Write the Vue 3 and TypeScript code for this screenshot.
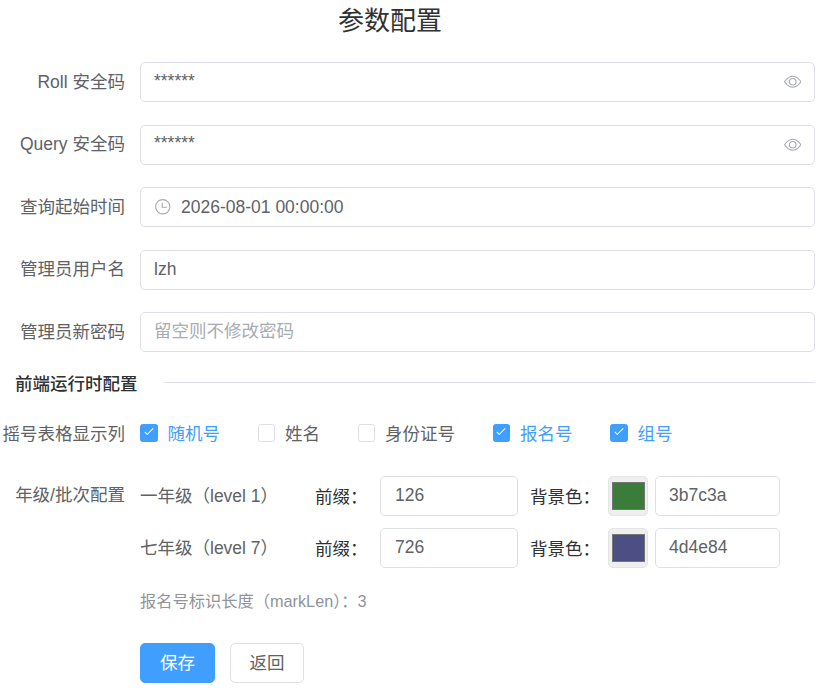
<template>
  <div class="page">
    <h2 class="title">参数配置</h2>

    <div v-for="row in secretRows" :key="row.label" class="form-item">
      <label class="item-label">{{ row.label }}</label>
      <div class="input-box">
        <input class="inner up" :value="row.value" />
        <svg class="icon" viewBox="0 0 1024 1024"><path fill="currentColor" :d="eyePath" /></svg>
      </div>
    </div>

    <div class="form-item">
      <label class="item-label">查询起始时间</label>
      <div class="input-box">
        <svg class="icon clock" viewBox="0 0 1024 1024">
          <path fill="currentColor" d="M512 896a384 384 0 1 0 0-768 384 384 0 0 0 0 768m0 64a448 448 0 1 1 0-896 448 448 0 0 1 0 896" />
          <path fill="currentColor" d="M480 256a32 32 0 0 1 32 32v256a32 32 0 0 1-64 0V288a32 32 0 0 1 32-32" />
          <path fill="currentColor" d="M480 512h256q32 0 32 32t-32 32H480q-32 0-32-32t32-32" />
        </svg>
        <input class="inner" value="2026-08-01 00:00:00" />
      </div>
    </div>

    <div class="form-item">
      <label class="item-label">管理员用户名</label>
      <div class="input-box"><input class="inner" value="lzh" /></div>
    </div>

    <div class="form-item last">
      <label class="item-label">管理员新密码</label>
      <div class="input-box"><input class="inner up" placeholder="留空则不修改密码" /></div>
    </div>

    <div class="divider">
      <span class="divider-text">前端运行时配置</span>
      <span class="divider-line"></span>
    </div>

    <div class="form-item columns">
      <label class="item-label">摇号表格显示列</label>
      <div class="checks">
        <div v-for="col in columns" :key="col.name" class="check" :class="{ on: col.on }">
          <span class="box"><span v-if="col.on" class="tick"></span></span>
          <span class="check-text">{{ col.name }}</span>
        </div>
      </div>
    </div>

    <div class="form-item grades">
      <label class="item-label">年级/批次配置</label>
      <div class="grade-list">
        <div v-for="g in grades" :key="g.name" class="grade">
          <span class="grade-name">{{ g.name }}</span>
          <span class="cap prefix-cap">前缀：</span>
          <div class="input-box prefix"><input class="inner" :value="g.prefix" /></div>
          <span class="cap color-cap">背景色：</span>
          <div class="swatch"><span class="swatch-fill" :style="{ background: '#' + g.color }"></span></div>
          <div class="input-box hex"><input class="inner" :value="g.color" /></div>
        </div>
        <div class="hint">报名号标识长度（markLen）：3</div>
      </div>
    </div>

    <div class="actions">
      <button class="btn primary">保存</button>
      <button class="btn">返回</button>
    </div>
  </div>
</template>

<script setup lang="ts">
const eyePath =
  'M512 160c320 0 512 352 512 352S832 864 512 864 0 512 0 512s192-352 512-352m0 64c-225.28 0-384.128 208.064-436.8 288 52.608 79.872 211.456 288 436.8 288 225.28 0 384.128-208.064 436.8-288-52.608-79.872-211.456-288-436.8-288zm0 64a224 224 0 1 1 0 448 224 224 0 0 1 0-448m0 64a160.192 160.192 0 0 0-160 160c0 88.192 71.744 160 160 160s160-71.808 160-160-71.744-160-160-160'

const secretRows = [
  { label: 'Roll 安全码', value: '******' },
  { label: 'Query 安全码', value: '******' }
]

const columns = [
  { name: '随机号', on: true },
  { name: '姓名', on: false },
  { name: '身份证号', on: false },
  { name: '报名号', on: true },
  { name: '组号', on: true }
]

const grades = [
  { name: '一年级（level 1）', prefix: '126', color: '3b7c3a' },
  { name: '七年级（level 7）', prefix: '726', color: '4d4e84' }
]
</script>

<style scoped>
.page {
  width: 815px;
  height: 700px;
  overflow: hidden;
  font-family: "Liberation Sans", "Noto Sans CJK SC", sans-serif;
  font-size: 17.5px;
  color: #606266;
}

.title {
  margin: 0 0 19px;
  padding-right: 35px;
  height: 43px;
  line-height: 43px;
  text-align: center;
  font-size: 26px;
  font-weight: 400;
  color: #303133;
}

.form-item {
  display: flex;
  align-items: center;
  height: 40px;
  margin-bottom: 22.5px;
}

.form-item.last {
  margin-bottom: 19px;
}

.item-label {
  flex: none;
  width: 125px;
  margin-bottom: 4px;
  text-align: right;
  white-space: nowrap;
}

.input-box {
  flex: 1;
  display: flex;
  align-items: center;
  height: 40px;
  box-sizing: border-box;
  margin-left: 15px;
  padding: 0 12.75px 0 13px;
  background: #fff;
  border: 1px solid #dcdfe6;
  border-radius: 5px;
}

.inner {
  flex: 1;
  min-width: 0;
  width: 100%;
  padding: 0;
  border: 0;
  outline: 0;
  background: none;
  font: inherit;
  color: #606266;
}

.inner.up {
  padding-bottom: 2px;
}

.inner::placeholder {
  color: #a8abb2;
  opacity: 1;
}

.icon {
  flex: none;
  width: 17.5px;
  height: 17.5px;
  color: #a8abb2;
}

.clock {
  margin-right: 9.5px;
}

.divider {
  display: flex;
  align-items: center;
  height: 20px;
  margin-bottom: 21px;
  padding-left: 15px;
}

.divider-text {
  margin-top: 6px;
  font-weight: 500;
  font-size: 17.5px;
  line-height: 20px;
  color: #303133;
}

.divider-line {
  flex: 1;
  height: 1px;
  margin-top: 2px;
  margin-left: 26px;
  background: #dcdfe6;
}

.columns {
  margin-bottom: 23px;
}

.columns .item-label {
  margin-bottom: 0;
}

.checks {
  display: flex;
  align-items: center;
  margin-left: 15px;
}

.check {
  display: flex;
  align-items: center;
  margin-right: 37.5px;
}

.box {
  display: flex;
  justify-content: center;
  width: 17.5px;
  height: 17.5px;
  margin-top: 2px;
  box-sizing: border-box;
  border: 1px solid #dcdfe6;
  border-radius: 2.5px;
  background: #fff;
}

.check.on .box {
  background: #409eff;
  border-color: #409eff;
}

.tick {
  width: 4px;
  height: 9px;
  margin-top: 1px;
  box-sizing: border-box;
  border: solid #fff;
  border-width: 0 1.25px 1.25px 0;
  transform: rotate(45deg);
}

.check-text {
  margin-left: 10px;
}

.check.on .check-text {
  color: #409eff;
}

.grades {
  align-items: flex-start;
  height: auto;
  margin-top: 24px;
  margin-bottom: 24px;
}

.grades .item-label {
  height: 40px;
  margin-bottom: 0;
  line-height: 38px;
}

.grade-list {
  flex: 1;
  margin-left: 15px;
}

.grade {
  display: flex;
  align-items: center;
  height: 40px;
  margin-bottom: 12px;
}

.grade-name {
  flex: none;
  width: 175px;
  margin-bottom: 4px;
  white-space: nowrap;
}

.cap {
  flex: none;
  margin-bottom: 2px;
  color: #303133;
  white-space: nowrap;
}

.prefix-cap {
  width: 65px;
}

.color-cap {
  width: 78px;
  margin-left: 12px;
}

.input-box.prefix {
  flex: none;
  width: 138px;
  margin-left: 0;
  padding-left: 14px;
}

.input-box.prefix .inner,
.input-box.hex .inner {
  padding-bottom: 1px;
}

.input-box.hex {
  flex: none;
  width: 125px;
  margin-left: 7px;
}

.swatch {
  flex: none;
  display: flex;
  align-items: center;
  justify-content: center;
  width: 40px;
  height: 40px;
  box-sizing: border-box;
  background: #efefef;
  border: 1px solid #e4e4e4;
  border-radius: 5px;
}

.swatch-fill {
  width: 33px;
  height: 28px;
  box-sizing: border-box;
  border: 1px solid #767676;
}

.hint {
  margin-top: 23px;
  line-height: 20px;
  font-size: 16.25px;
  color: #909399;
}

.actions {
  display: flex;
  margin-top: 32px;
  padding-left: 140px;
}

.btn {
  width: 74px;
  height: 40px;
  margin-right: 16px;
  padding: 0 0 3px;
  font: inherit;
  color: #606266;
  background: #fff;
  border: 1px solid #dcdfe6;
  border-radius: 5px;
}

.btn.primary {
  width: 75px;
  margin-right: 15px;
  color: #fff;
  background: #409eff;
  border-color: #409eff;
}
</style>
